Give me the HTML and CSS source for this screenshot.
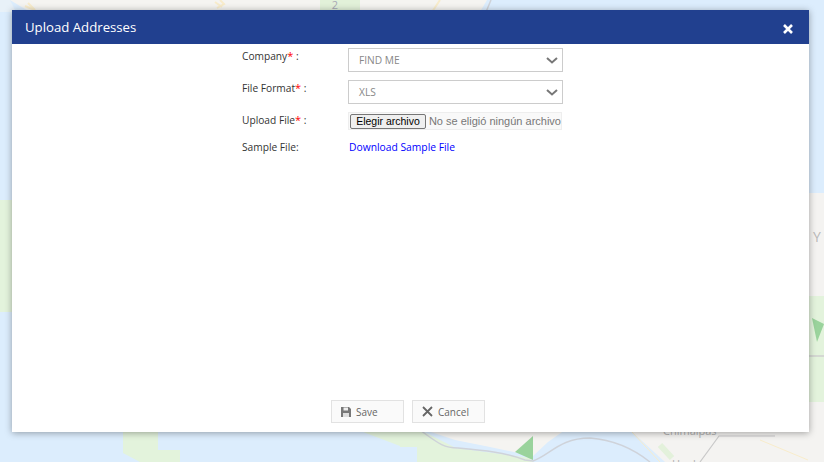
FILE: index.html
```html
<!DOCTYPE html>
<html lang="en">
<head>
<meta charset="utf-8">
<title>Upload Addresses</title>
<link rel="stylesheet" href="styles.css">
</head>
<body>
<svg class="map" width="824" height="462" viewBox="0 0 824 462" aria-hidden="true">
  <rect width="824" height="462" fill="#dcedfd"/>
  <path d="M10 0H487L480 12H30Z" fill="#f5f4f1"/>
  <path d="M0 0H10L16 12H0Z" fill="#e8f1f8"/>
  <path d="M320 0H360V10H320Z" fill="#e2f1d9"/>
  <path d="M491 0L486 12" fill="none" stroke="#cfd2d8" stroke-width="1.5"/>
  <path d="M220 0L224 4L217 8M25 6L35 10L28 3M440 0L432 12M215 2L222 7" fill="none" stroke="#f8eccb" stroke-width="2"/>
  <text class="map-num" x="335" y="9">2</text>
  <path d="M0 200H12V312H0Z" fill="#e3f3dc"/>
  <path d="M809 193H824V462H809Z" fill="#f4f3f1"/>
  <path d="M809 296H824V402H809Z" fill="#e3f3dc"/>
  <path d="M809 356H824" stroke="#cfcfcf" stroke-width="1.5"/>
  <path d="M812 318L824 324L817 342Z" fill="#9ad39c"/>
  <text class="map-label" x="813" y="242">Y</text>
  <path d="M123 430H158V450H180V462H140L123 453Z" fill="#e3f3dc"/>
  <path d="M358 430H420L456 448L530 458L533 462H540L400 462L400 446Z" fill="#e3f3dc"/>
  <path d="M400 447H417L417 462H400Z" fill="#dcedfd"/>
  <path d="M425 430H565L548 442L533 456L490 447L455 440Z" fill="#f5f4f1"/>
  <path d="M630 430H824V462H665Z" fill="#f4f3f1"/>
  <path d="M420 430C440 445 445 448 458 448C480 450 505 452 525 460L533 461C550 455 560 438 590 438C615 440 635 450 650 462" fill="none" stroke="#cfd3da" stroke-width="1.5"/>
  <path d="M533 436V460L515 452Z" fill="#9ad39c"/>
  <path d="M700 462L719 436H775" fill="none" stroke="#c9c9c9" stroke-width="1.2"/>
  <path d="M632 432L660 462M760 440L808 460" fill="none" stroke="#f8eccb"/>
  <path d="M660 445L672 458" stroke="#e3f1db" stroke-width="6"/>
  <text class="map-label-sm" x="663" y="435">Chimalpas</text>
  <text class="map-label-sm" x="672" y="468">Huala</text>
</svg>
<main class="modal">
  <header class="modal-head">
    <h1 class="modal-title">Upload Addresses</h1>
    <svg class="close" width="10" height="10" viewBox="0 0 10 10" aria-label="Close"><path d="M1 1L9 9M9 1L1 9" stroke="#fff" stroke-width="2.6"/></svg>
  </header>
  <form class="modal-body">
    <div class="rows">
      <div class="row">
        <label class="label">Company<span class="req">*</span> :</label>
        <div class="select"><span>FIND ME</span><svg width="12" height="7" viewBox="0 0 12 7"><path d="M1 1L6 5.5L11 1" fill="none" stroke="#777" stroke-width="2"/></svg></div>
      </div>
      <div class="row">
        <label class="label">File Format<span class="req">*</span> :</label>
        <div class="select"><span>XLS</span><svg width="12" height="7" viewBox="0 0 12 7"><path d="M1 1L6 5.5L11 1" fill="none" stroke="#777" stroke-width="2"/></svg></div>
      </div>
      <div class="row">
        <label class="label">Upload File<span class="req">*</span> :</label>
        <div class="file"><button type="button" class="file-btn">Elegir archivo</button><span class="file-name">No se eligió ningún archivo</span></div>
      </div>
      <div class="row row-sample">
        <label class="label">Sample File:</label>
        <a class="link" href="#">Download Sample File</a>
      </div>
    </div>
    <div class="actions">
      <button type="button" class="btn">
        <svg width="10" height="10" viewBox="0 0 10 10"><path d="M0 0H8L10 2V10H0Z" fill="#777"/><path d="M2.5 0.5H7V3.5H2.5Z" fill="#eee"/><path d="M2 6H8V10H2Z" fill="#ddd"/></svg>
        Save
      </button>
      <button type="button" class="btn">
        <svg width="11" height="11" viewBox="0 0 11 11"><path d="M1 1L10 10M10 1L1 10" stroke="#666" stroke-width="1.8"/></svg>
        Cancel
      </button>
    </div>
  </form>
</main>
</body>
</html>
```
FILE: styles.css
```css
html, body { margin: 0; padding: 0; }
body {
  width: 824px;
  height: 462px;
  overflow: hidden;
  position: relative;
  font-family: "Open Sans", sans-serif;
  color: #333;
}
.map { position: absolute; left: 0; top: 0; }
.map-num { font-size: 11px; fill: #a9a9b5; text-anchor: middle; }
.map-label { font-size: 14px; fill: #b9b9b9; }
.map-label-sm { font-size: 11px; fill: #b0b0b0; }
.modal {
  position: absolute;
  left: 12px;
  top: 10px;
  width: 797px;
  height: 422px;
  background: #fff;
  display: flex;
  flex-direction: column;
  box-shadow: 0 1px 7px rgba(0, 0, 0, 0.35);
}
.modal-head {
  height: 34px;
  flex: none;
  background: #21408f;
  display: flex;
  align-items: center;
  justify-content: space-between;
  padding: 0 16px 0 13px;
}
.modal-title {
  margin: 0;
  font-size: 13.2px;
  font-weight: 400;
  color: #fff;
}
.close { margin-top: 3px; }
.modal-body {
  flex: 1;
  display: flex;
  flex-direction: column;
  justify-content: space-between;
  padding: 4px 0 9px 230px;
}
.rows { display: flex; flex-direction: column; gap: 8px; }
.row { display: flex; align-items: flex-start; }
.label {
  width: 106px;
  flex: none;
  font-size: 10.2px;
  line-height: 14px;
  color: #333;
  margin-top: 1px;
}
.req { color: #f00; font-size: 11px; }
.select {
  width: 215px;
  height: 24px;
  box-sizing: border-box;
  border: 1px solid #ccc;
  display: flex;
  align-items: center;
  justify-content: space-between;
  padding: 0 4px 0 10px;
  font-size: 10.2px;
  color: #888;
}
.file {
  width: 214px;
  height: 18px;
  box-sizing: border-box;
  display: flex;
  align-items: center;
  background: #f9f9f9;
  border: 1px solid #eee;
  padding-left: 1px;
}
.file-btn {
  width: 76px;
  height: 15px;
  box-sizing: border-box;
  padding: 0;
  border: 1px solid #767676;
  border-radius: 2px;
  background: #efefef;
  font-family: "Liberation Sans", sans-serif;
  font-size: 10.5px;
  line-height: 13px;
  color: #000;
}
.file-name {
  margin-left: 3px;
  font-family: "Liberation Sans", sans-serif;
  font-size: 11px;
  color: #777;
  white-space: nowrap;
}
.row-sample { margin-top: 1px; }
.link {
  font-size: 10.3px;
  line-height: 14px;
  margin-top: 1px;
  margin-left: 1px;
  color: #00f;
  text-decoration: none;
}
.actions { display: flex; gap: 8px; margin-left: 89px; }
.btn {
  width: 73px;
  height: 23px;
  box-sizing: border-box;
  border: 1px solid #e2e2e2;
  background: #fafafa;
  display: flex;
  align-items: center;
  gap: 5px;
  padding: 0 0 0 9px;
  font-family: "Open Sans", sans-serif;
  font-size: 10px;
  color: #666;
}
```
